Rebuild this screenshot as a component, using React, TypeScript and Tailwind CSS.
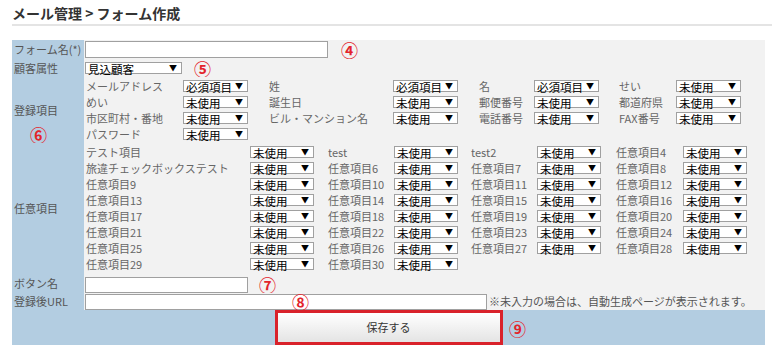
import React from "react";

const font = "font-['Meiryo','Noto_Sans_CJK_JP','Noto_Sans',sans-serif]";

function Num({ children, className = "" }: { children: React.ReactNode; className?: string }) {
  return (
    <span className={`text-[17px] font-bold leading-[17px] text-[#e3242b] ${className}`}>
      {children}
    </span>
  );
}

function Sel({ text = "未使用", className = "w-[65px]" }: { text?: string; className?: string }) {
  return (
    <div className={`relative h-[12px] border border-[#a0a0a0] bg-white ${className}`}>
      <span className="absolute left-[2px] top-[-2px] text-[11.5px] leading-[17px] text-black whitespace-nowrap">
        {text}
      </span>
      <span className="absolute right-[4px] top-[-1px] text-[8px] leading-[12px] text-black">▼</span>
    </div>
  );
}

const basic = [
  ["メールアドレス", "必須項目", "姓", "必須項目", "名", "必須項目", "せい", "未使用"],
  ["めい", "未使用", "誕生日", "未使用", "郵便番号", "未使用", "都道府県", "未使用"],
  ["市区町村・番地", "未使用", "ビル・マンション名", "未使用", "電話番号", "未使用", "FAX番号", "未使用"],
  ["パスワード", "未使用"],
];

const custom: string[][] = [
  ["テスト項目", "test", "test2", "任意項目4"],
  ["旅違チェックボックステスト", "任意項目6", "任意項目7", "任意項目8"],
  ["任意項目9", "任意項目10", "任意項目11", "任意項目12"],
  ["任意項目13", "任意項目14", "任意項目15", "任意項目16"],
  ["任意項目17", "任意項目18", "任意項目19", "任意項目20"],
  ["任意項目21", "任意項目22", "任意項目23", "任意項目24"],
  ["任意項目25", "任意項目26", "任意項目27", "任意項目28"],
  ["任意項目29", "任意項目30"],
];

function Row({ label, children, className = "", left }: { label: string; children: React.ReactNode; className?: string; left?: React.ReactNode }) {
  return (
    <div className={`flex ${className}`}>
      <div className="relative flex w-[72px] shrink-0 items-center bg-[#b3cde1] pl-[2px] text-[11px] text-[#555]">
        {label}
        {left}
      </div>
      <div className="relative flex flex-1 items-center bg-[#f2f2f2] pl-[1px]">{children}</div>
    </div>
  );
}

export default function App() {
  return (
    <div className={`relative h-[355px] w-[772px] overflow-hidden bg-white ${font}`}>
      <div className="ml-[12px] border-b-2 border-[#e4e4e4] pb-[2px] pt-[4px] text-[14px] font-bold leading-[18px] text-[#333]">
        メール管理 &gt; フォーム作成
      </div>

      <div className="ml-[12px] mt-[14px] flex w-[753px] flex-col">
        <Row label="フォーム名(*)" className="h-[19px]">
          <div className="h-[17px] w-[243px] border border-[#a0a0a0] bg-white" />
          <Num className="ml-[13px]">④</Num>
        </Row>

        <Row label="顧客属性" className="h-[18px]">
          <Sel text="見込顧客" className="w-[97px]" />
          <Num className="ml-[12px]">⑤</Num>
        </Row>

        <Row
          label="登録項目"
          className="h-[66px]"
          left={<Num className="absolute left-[18px] top-[49px]">⑥</Num>}
        >
          <div className="grid grid-cols-[97px_86px_124px_86px_55px_85px_57px_66px] pl-[1px] text-[11px] leading-[16px] text-[#666]">
            {basic.map((r, i) =>
              r.map((c, j) =>
                j % 2 === 0 ? (
                  <div key={`${i}-${j}`} className="whitespace-nowrap">{c}</div>
                ) : (
                  <div key={`${i}-${j}`} className="flex h-[16px] items-center">
                    <Sel text={c} className="w-[65px]" />
                  </div>
                )
              )
            )}
          </div>
        </Row>

        <Row label="任意項目" className="h-[130px]">
          <div className="grid grid-cols-[164px_78px_66px_77px_66px_79px_67px_65px] pl-[1px] text-[11px] leading-[16px] text-[#666]">
            {custom.map((r, i) =>
              r.flatMap((c, j) => [
                <div key={`${i}-${j}-l`} className="whitespace-nowrap">{c}</div>,
                <div key={`${i}-${j}-s`} className="flex h-[16px] items-center">
                  <Sel className="w-[64px]" />
                </div>,
              ])
            )}
          </div>
        </Row>

        <Row label="ボタン名" className="h-[20px]">
          <div className="mt-[4px] h-[16px] w-[163px] border border-[#a0a0a0] bg-white" />
          <Num className="ml-[11px] mt-[3px]">⑦</Num>
        </Row>

        <Row label="登録後URL" className="h-[17px]">
          <div className="mt-[1px] h-[16px] w-[402px] border border-[#a0a0a0] bg-white" />
          <span className="ml-[2px] text-[11px] text-[#555]">※未入力の場合は、自動生成ページが表示されます。</span>
          <Num className="absolute left-[208px] top-[0px]">⑧</Num>
        </Row>

        <div className="relative flex h-[35px] items-center justify-center bg-[#b3cde1]">
          <div className="flex h-[35px] w-[228px] items-center justify-center border-[3px] border-[#d9222b] bg-gradient-to-b from-white to-[#e4e4e4] text-[11px] text-[#333]">
            保存する
          </div>
          <Num className="absolute left-[497px] top-[10px]">⑨</Num>
        </div>
      </div>
    </div>
  );
}
